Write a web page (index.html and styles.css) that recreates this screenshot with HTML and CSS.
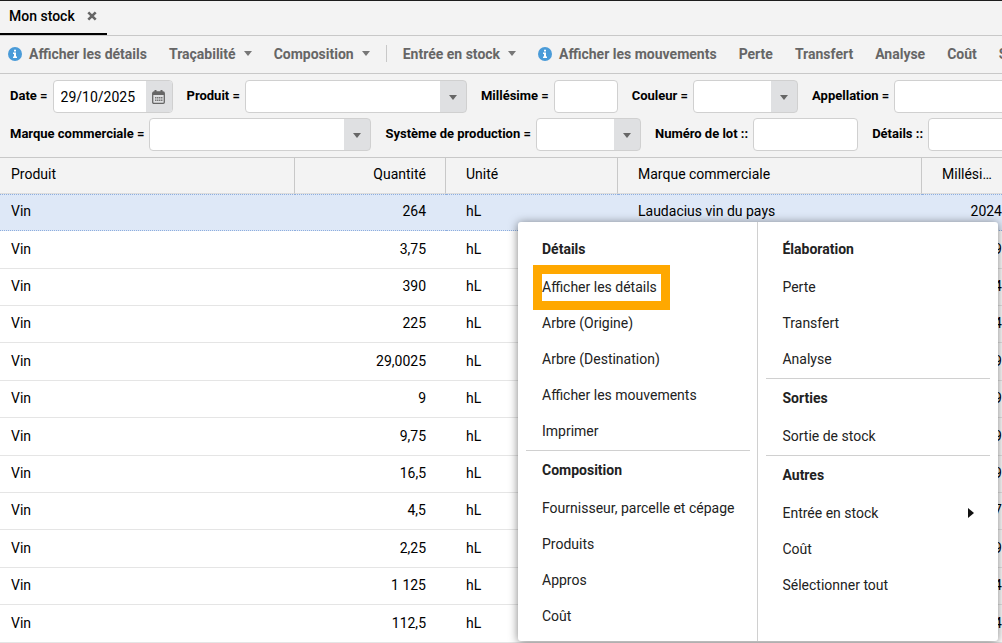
FILE: index.html
```html
<!DOCTYPE html>
<html lang="fr">
<head>
  <meta charset="UTF-8" />
  <meta name="viewport" content="width=device-width, initial-scale=1.0" />
  <title>Mon stock</title>
  <link rel="stylesheet" href="styles.css">
</head>
<body>
  <nav class="tabs">
    <div class="tab active">
      <a href="#stock">Mon stock</a>
      <button class="tab-close" aria-label="Fermer">
        <svg width="10" height="10" viewBox="0 0 10 10"><path d="M1.3 1.3l7.4 7.4M8.7 1.3l-7.4 7.4" stroke="#666" stroke-width="2.6" /></svg>
      </button>
    </div>
  </nav>

  <div class="toolbar">
    <button class="tool">
      <svg class="info" viewBox="0 0 14 14"><circle cx="7" cy="7" r="7" fill="#4a9bd8" /><path d="M6 2.7h2v1.8H6zM5 5.6h3v4h1v1.4H5V9.6h1V7H5z" fill="#fff" /></svg>
      Afficher les détails
    </button>
    <button class="tool">Traçabilité <span class="caret"></span></button>
    <button class="tool">Composition <span class="caret"></span></button>
    <span class="separator"></span>
    <button class="tool">Entrée en stock <span class="caret"></span></button>
    <button class="tool">
      <svg class="info" viewBox="0 0 14 14"><circle cx="7" cy="7" r="7" fill="#4a9bd8" /><path d="M6 2.7h2v1.8H6zM5 5.6h3v4h1v1.4H5V9.6h1V7H5z" fill="#fff" /></svg>
      Afficher les mouvements
    </button>
    <button class="tool">Perte</button>
    <button class="tool">Transfert</button>
    <button class="tool">Analyse</button>
    <button class="tool">Coût</button>
    <button class="tool">Sortie de stock</button>
  </div>

  <form class="filters">
    <div class="filter-row">
      <div class="filter">
        <label for="date">Date =</label>
        <div class="field date">
          <input type="text" id="date" value="29/10/2025" />
          <button type="button" class="trigger" aria-label="Calendrier">
            <svg width="13" height="14" viewBox="0 0 13 14">
              <path d="M2 2h9a1.3 1.3 0 0 1 1.3 1.3v8.9a1.1 1.1 0 0 1-1.1 1.1H1.8a1.1 1.1 0 0 1-1.1-1.1V3.3A1.3 1.3 0 0 1 2 2z" fill="none" stroke="#666" stroke-width="1.3" />
              <path d="M1 2h11v3H1zM2.5 0h2v3h-2zM8.5 0h2v3h-2z" fill="#666" />
              <path d="M3 7h1.5v1.5H3zM5 7h1.5v1.5H5zM7 7h1.5v1.5H7zM9 7h1.5v1.5H9zM3 9.5h1.5V11H3zM5 9.5h1.5V11H5zM7 9.5h1.5V11H7zM9 9.5h1.5V11H9z" fill="#777" />
            </svg>
          </button>
        </div>
      </div>
      <div class="filter">
        <label for="produit">Produit =</label>
        <div class="field combo wide"><select id="produit"><option></option></select></div>
      </div>
      <div class="filter">
        <label for="millesime">Millésime =</label>
        <div class="field small"><input type="text" id="millesime" /></div>
      </div>
      <div class="filter">
        <label for="couleur">Couleur =</label>
        <div class="field combo medium"><select id="couleur"><option></option></select></div>
      </div>
      <div class="filter">
        <label for="appellation">Appellation =</label>
        <div class="field combo wide"><select id="appellation"><option></option></select></div>
      </div>
    </div>
    <div class="filter-row">
      <div class="filter">
        <label for="marque">Marque commerciale =</label>
        <div class="field combo wide"><select id="marque"><option></option></select></div>
      </div>
      <div class="filter">
        <label for="systeme">Système de production =</label>
        <div class="field combo medium"><select id="systeme"><option></option></select></div>
      </div>
      <div class="filter">
        <label for="lot">Numéro de lot ::</label>
        <div class="field medium"><input type="text" id="lot" /></div>
      </div>
      <div class="filter">
        <label for="details">Détails ::</label>
        <div class="field medium"><input type="text" id="details" /></div>
      </div>
    </div>
  </form>

  <main class="grid">
    <table>
      <colgroup>
        <col class="col-produit"><col class="col-quantite"><col class="col-unite"><col class="col-marque"><col class="col-millesime">
      </colgroup>
      <thead>
        <tr><th>Produit</th><th class="num">Quantité</th><th>Unité</th><th>Marque commerciale</th><th class="cut">Millésime</th></tr>
      </thead>
      <tbody>
        <tr class="selected"><td>Vin</td><td class="num">264</td><td>hL</td><td>Laudacius vin du pays</td><td class="num">2024</td></tr>
        <tr><td>Vin</td><td class="num">3,75</td><td>hL</td><td></td><td class="num">2019</td></tr>
        <tr><td>Vin</td><td class="num">390</td><td>hL</td><td></td><td class="num">2024</td></tr>
        <tr><td>Vin</td><td class="num">225</td><td>hL</td><td></td><td class="num">2024</td></tr>
        <tr><td>Vin</td><td class="num">29,0025</td><td>hL</td><td></td><td class="num">2019</td></tr>
        <tr><td>Vin</td><td class="num">9</td><td>hL</td><td></td><td class="num">2019</td></tr>
        <tr><td>Vin</td><td class="num">9,75</td><td>hL</td><td></td><td class="num">2019</td></tr>
        <tr><td>Vin</td><td class="num">16,5</td><td>hL</td><td></td><td class="num">2019</td></tr>
        <tr><td>Vin</td><td class="num">4,5</td><td>hL</td><td></td><td class="num">2017</td></tr>
        <tr><td>Vin</td><td class="num">2,25</td><td>hL</td><td></td><td class="num">2019</td></tr>
        <tr><td>Vin</td><td class="num">1 125</td><td>hL</td><td></td><td class="num">2024</td></tr>
        <tr><td>Vin</td><td class="num">112,5</td><td>hL</td><td></td><td class="num">2024</td></tr>
      </tbody>
    </table>
  </main>

  <div class="menu">
    <div class="menu-column">
      <section class="menu-group">
        <h3>Détails</h3>
        <button><span class="highlight">Afficher les détails</span></button>
        <button>Arbre (Origine)</button>
        <button>Arbre (Destination)</button>
        <button>Afficher les mouvements</button>
        <button>Imprimer</button>
      </section>
      <section class="menu-group">
        <h3>Composition</h3>
        <button>Fournisseur, parcelle et cépage</button>
        <button>Produits</button>
        <button>Appros</button>
        <button>Coût</button>
      </section>
    </div>
    <div class="menu-column">
      <section class="menu-group">
        <h3>Élaboration</h3>
        <button>Perte</button>
        <button>Transfert</button>
        <button>Analyse</button>
      </section>
      <section class="menu-group">
        <h3>Sorties</h3>
        <button>Sortie de stock</button>
      </section>
      <section class="menu-group">
        <h3>Autres</h3>
        <button>Entrée en stock <span class="submenu-arrow"></span></button>
        <button>Coût</button>
        <button>Sélectionner tout</button>
      </section>
    </div>
  </div>
</body>
</html>
```
FILE: styles.css
```css
* {
  box-sizing: border-box;
  margin: 0;
  padding: 0;
}
body {
  font-family: Roboto, "Liberation Sans", sans-serif;
  font-size: 14px;
  color: #000;
  background-color: #fff;
  position: relative;
  min-height: 100vh;
  overflow: hidden;
}
button, input, select {
  font: inherit;
  color: inherit;
}
button {
  background: none;
  border: none;
  cursor: pointer;
}

/* tabs */
.tabs {
  display: flex;
  height: 36px;
  background-color: #f3f3f3;
  border-top: 1px solid #1d1d1d;
  border-bottom: 1px solid #c8c8c8;
}
.tab {
  display: flex;
  align-items: center;
  gap: 12px;
  padding: 0 10px 2px 9px;
}
.tab.active {
  border-bottom: 2px solid #000;
}
.tab a {
  color: #000;
  font-weight: 500;
  text-decoration: none;
}
.tab-close {
  display: flex;
}

/* toolbar */
.toolbar {
  display: flex;
  align-items: center;
  gap: 22px;
  height: 38px;
  padding: 0 0 2px 8px;
  background-color: #f3f3f3;
  border-bottom: 1px solid #c8c8c8;
  overflow: hidden;
}
.tool {
  display: flex;
  align-items: center;
  flex-shrink: 0;
  gap: 7px;
  font-weight: 700;
  color: #666;
  white-space: nowrap;
}
.info {
  width: 14px;
  height: 14px;
}
.caret {
  margin-left: 1px;
  border: 4px solid transparent;
  border-top: 5px solid #777;
  border-bottom: 0;
}
.separator {
  flex-shrink: 0;
  width: 1px;
  height: 17px;
  margin: 0 -6px;
  background-color: #c8c8c8;
}

/* filters */
.filters {
  display: flex;
  flex-direction: column;
  gap: 5px;
  padding: 6px 0 6px 10px;
  background-color: #f3f3f3;
  border-bottom: 1px solid #c8c8c8;
  overflow: hidden;
}
.filter-row {
  display: flex;
  gap: 14px;
}
.filter {
  display: flex;
  align-items: center;
  flex-shrink: 0;
  gap: 5px;
}
.filter label {
  padding-bottom: 2px;
  font-size: 13px;
  font-weight: 700;
  white-space: nowrap;
}
.field {
  display: flex;
  position: relative;
  height: 33px;
  background-color: #fff;
  border: 1px solid #d0d0d0;
  border-radius: 4px;
  overflow: hidden;
}
.field input, .field select {
  flex: 1;
  min-width: 0;
  border: none;
  outline: none;
  background: none;
  padding-left: 7px;
  appearance: none;
}
.date {
  width: 120px;
}
.small {
  width: 64px;
}
.medium {
  width: 105px;
}
.wide {
  width: 222px;
}
.trigger {
  display: flex;
  align-items: center;
  justify-content: center;
  width: 26px;
  background-color: #dfe0e2;
}
.combo {
  background: linear-gradient(#dfe0e2, #dfe0e2) right / 26px 100% no-repeat #fff;
}
.combo::after {
  content: "";
  position: absolute;
  top: 14px;
  right: 9px;
  border: 4px solid transparent;
  border-top: 5px solid #666;
  border-bottom: 0;
  pointer-events: none;
}

/* stock table */
.grid {
  overflow: hidden;
}
table {
  width: 1022px;
  min-width: 100%;
  table-layout: fixed;
  border-collapse: separate;
  border-spacing: 0;
}
.col-produit {
  width: 295px;
}
.col-quantite {
  width: 151px;
}
.col-unite {
  width: 172px;
}
.col-marque {
  width: 304px;
}
th, td {
  height: 37px;
  padding: 0 20px 2px;
  text-align: left;
  font-weight: 400;
  white-space: nowrap;
  border-bottom: 1px solid #e5e5e5;
}
th {
  height: 36px;
  padding-bottom: 3px;
  background-color: #f3f3f3;
  border-right: 1px solid #c8c8c8;
  border-bottom-color: #dcdcdc;
}
th:first-child, td:first-child {
  padding-left: 11px;
}
th.num {
  padding-right: 19px;
}
.num {
  text-align: right;
}
.cut {
  padding-right: 28px;
  overflow: hidden;
  text-overflow: ellipsis;
}
tbody tr:nth-child(5n+2) td, tbody tr:nth-child(5n) td {
  height: 38px;
}
.selected td {
  padding-bottom: 3px;
  background-color: #dee8f7;
  border-top: 1px dotted #8eaede;
  border-bottom: 1px dotted #8eaede;
}

/* context menu */
.menu {
  position: absolute;
  top: 222px;
  left: 518px;
  display: flex;
  width: 480px;
  color: #222;
  background-color: #fff;
  border-radius: 3px;
  box-shadow: 0 1px 10px rgba(0,0,0,0.5);
}
.menu-column {
  flex: 1;
  padding: 8px 8px 6px;
}
.menu-column:first-child {
  padding-right: 7px;
  border-right: 1px solid #d0d0d0;
}
.menu-group {
  padding-bottom: 1px;
}
.menu-group + .menu-group {
  border-top: 1px solid #d0d0d0;
}
.menu h3 {
  height: 39px;
  padding-left: 16px;
  font-size: 14px;
  font-weight: 700;
  line-height: 38px;
}
.menu button {
  display: flex;
  align-items: center;
  justify-content: space-between;
  width: 100%;
  height: 36px;
  padding: 0 16px;
  white-space: nowrap;
}
.highlight {
  position: relative;
  line-height: 36px;
}
.highlight::after {
  content: "";
  position: absolute;
  inset: -4px -13px -5px -9px;
  border: 9px solid #ffa800;
}
.submenu-arrow {
  border: 5px solid transparent;
  border-left: 6px solid #111;
  border-right: 0;
}
```
